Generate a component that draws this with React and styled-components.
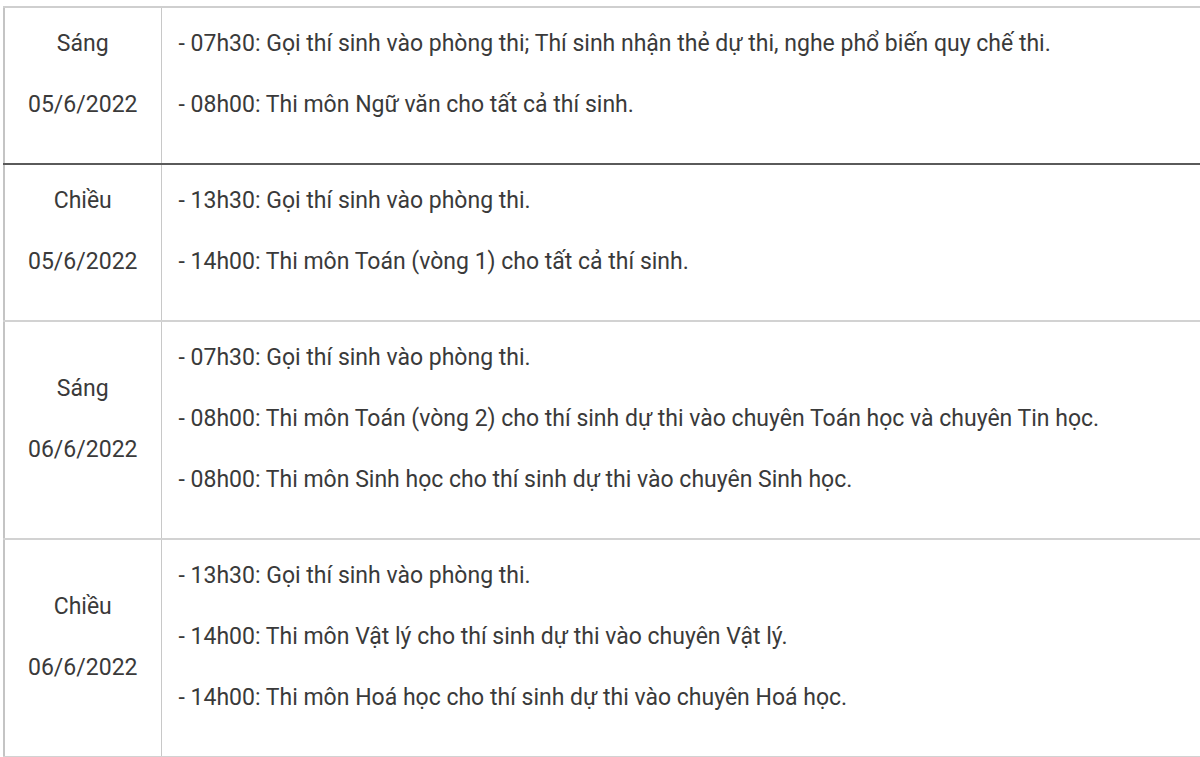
import styled, { createGlobalStyle } from "styled-components";

const GlobalStyle = createGlobalStyle`
  html, body {
    margin: 0;
    padding: 0;
    background: #fff;
  }
  body {
    font-family: Roboto, "Noto Sans", "Liberation Sans", sans-serif;
    color: #333;
  }
`;

const Page = styled.div`
  width: 1200px;
  height: 757px;
  overflow: hidden;
  padding: 6px 0 0 3px;
  box-sizing: border-box;
`;

const Table = styled.table`
  width: 1210px;
  border-collapse: collapse;
  border-top: 2px solid #cfcfcf;
  border-left: 2px solid #c4c4c4;
`;

const Row = styled.tr`
  border-bottom: ${(p) => (p.$dark ? "2px solid #5a5a5a" : "2px solid #d2d2d2")};
`;

const TimeCell = styled.td`
  width: 157px;
  box-sizing: border-box;
  text-align: center;
  vertical-align: middle;
  border-right: 1px solid #c8c8c8;
  padding: 20px 6px 13px;
`;

const InfoCell = styled.td`
  vertical-align: top;
  padding: 20px 17px 13px;
`;

const Line = styled.p`
  margin: 0 0 30px;
  font-size: 23px;
  line-height: 31px;
  color: #3a3a3a;
  white-space: nowrap;
`;

const schedule = [
  {
    session: "Sáng",
    date: "05/6/2022",
    dark: true,
    items: [
      "- 07h30: Gọi thí sinh vào phòng thi; Thí sinh nhận thẻ dự thi, nghe phổ biến quy chế thi.",
      "- 08h00: Thi môn Ngữ văn cho tất cả thí sinh.",
    ],
  },
  {
    session: "Chiều",
    date: "05/6/2022",
    items: [
      "- 13h30: Gọi thí sinh vào phòng thi.",
      "- 14h00: Thi môn Toán (vòng 1) cho tất cả thí sinh.",
    ],
  },
  {
    session: "Sáng",
    date: "06/6/2022",
    items: [
      "- 07h30: Gọi thí sinh vào phòng thi.",
      "- 08h00: Thi môn Toán (vòng 2) cho thí sinh dự thi vào chuyên Toán học và chuyên Tin học.",
      "- 08h00: Thi môn Sinh học cho thí sinh dự thi vào chuyên Sinh học.",
    ],
  },
  {
    session: "Chiều",
    date: "06/6/2022",
    items: [
      "- 13h30: Gọi thí sinh vào phòng thi.",
      "- 14h00: Thi môn Vật lý cho thí sinh dự thi vào chuyên Vật lý.",
      "- 14h00: Thi môn Hoá học cho thí sinh dự thi vào chuyên Hoá học.",
    ],
  },
];

export default function App() {
  return (
    <>
      <GlobalStyle />
      <Page>
        <Table>
          <tbody>
            {schedule.map((row, i) => (
              <Row key={i} $dark={row.dark}>
                <TimeCell>
                  <Line>{row.session}</Line>
                  <Line>{row.date}</Line>
                </TimeCell>
                <InfoCell>
                  {row.items.map((item, j) => (
                    <Line key={j}>{item}</Line>
                  ))}
                </InfoCell>
              </Row>
            ))}
          </tbody>
        </Table>
      </Page>
    </>
  );
}
